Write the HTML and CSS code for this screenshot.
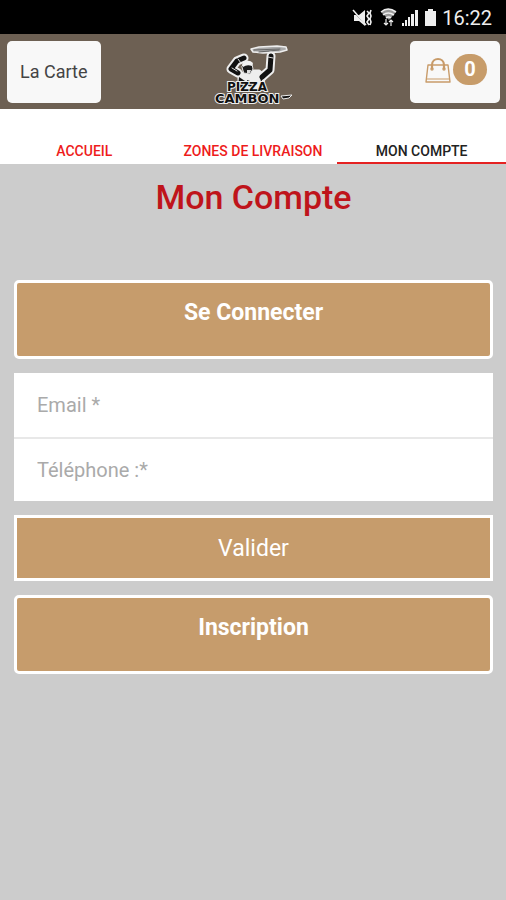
FILE: index.html
```html
<!DOCTYPE html>
<html lang="fr">
<head>
<meta charset="utf-8">
<meta name="viewport" content="width=device-width, initial-scale=1">
<title>Mon Compte</title>
<link rel="stylesheet" href="styles.css">
</head>
<body>
<div class="status">
  <svg class="status-icons" width="88" height="20" viewBox="0 0 88 20" aria-hidden="true">
    <g fill="#eee">
      <path d="M3 7h5l6-5v16l-6-5H3z"/>
      <path d="M2 3l13 14" stroke="#000" stroke-width="1"/>
      <path d="M2 2l13 15" stroke="#eee" stroke-width="1.5"/>
      <path d="M16 3l2 2-2 3 2 3-2 3 2 3M20 2l-1 3 1 3-1 3 1 3-1 3" fill="none" stroke="#eee" stroke-width="1.6"/>
      <path d="M30 4q7-6 15 0l-7 8z" fill="#999"/>
      <path d="M30 4q7-6 15 0M32 7q5-4 11 0M35 10q3-2 5 0" fill="none" stroke="#eee" stroke-width="1.6"/>
      <path d="M35 11v6M33 15l2 2 2-2M40 18v-6M38 14l2-2 2 2" fill="none" stroke="#eee" stroke-width="1.2"/>
      <path d="M51 15h2v3h-2zM54 12h2v6h-2zM57 9h2v9h-2zM60 6h3v12h-3zM64 2h3v16h-3z"/>
      <path d="M77 1h5v2h3v15H74V3h3z"/>
    </g>
  </svg>
  <span>16:22</span>
</div>
<header class="header">
  <button class="header-button" type="button">La Carte</button>
  <svg class="logo" width="84" height="70" viewBox="0 0 84 70" role="img" aria-label="Pizza Cambon">
    <g transform="translate(0 2)" stroke-linejoin="round" stroke-linecap="round">
      <path d="M37 10l8-2 18-1 9 1 1 3-7 2-17 1-10-1z" fill="#aaa" stroke="#eee" stroke-width="1.5"/>
      <path d="M40 11l26-1M45 13l20-2" stroke="#666" fill="none"/>
      <path d="M30 19l-7 3-6 8 7 4M57 17l-1 14-8 7" fill="none" stroke="#eee" stroke-width="9"/>
      <path d="M25 36l8-4h12l6 5-4 12H25z" fill="#eee" stroke="#eee" stroke-width="3"/>
      <path d="M30 19l-7 3-6 8 7 4M57 17l-1 14-8 7" fill="none" stroke="#111" stroke-width="5"/>
      <path d="M54 18l5 1M24 20l3 4M18 29l5 3" fill="none" stroke="#ddd"/>
      <path d="M28 27q4-6 10-2l1 5-3 5-6-1z" fill="#1b1b1b" stroke="#ddd" stroke-width="1"/>
      <path d="M28 25q6-6 11-1l-1 3q-5-2-9 1z" fill="#f2f2f2"/>
      <path d="M33 31h4l-1 3h-3z" fill="#ddd"/>
      <path d="M25 38l6 4-1 6-6 1zM33 41l6 2v5l-5-1zM46 38l5-2-4 7z" fill="#151515"/>
    </g>
    <g class="logo-text">
      <text class="logo-top" x="13" y="54">PIZZA</text>
      <text x="1" y="66">CAMBON</text>
    </g>
    <path d="M67 59l11-1-3 3-6 1z" fill="#111" stroke="#eee"/>
  </svg>
  <button class="header-button cart" type="button" aria-label="Panier, 0 article">
    <svg width="26" height="26" viewBox="0 0 26 26" fill="none" stroke="#c89b69" stroke-width="1.4" stroke-linejoin="round" aria-hidden="true">
      <path d="M3 8h20l2 17H1z"/>
      <path d="M1 22h24" stroke-width="1"/>
      <path d="M7 12V8c0-8 12-8 12 0v4" stroke-width="2.2"/>
      <circle cx="7" cy="12" r="1"/><circle cx="19" cy="12" r="1"/>
    </svg>
    <span class="badge">0</span>
  </button>
</header>
<nav class="tabs">
  <a class="tab" href="#accueil">ACCUEIL</a>
  <a class="tab" href="#zones">ZONES DE LIVRAISON</a>
  <a class="tab tab-active" href="#compte" aria-current="page">MON COMPTE</a>
</nav>
<main class="account">
  <h1 class="title">Mon Compte</h1>
  <button class="action action-tall" type="button">Se Connecter</button>
  <form class="login">
    <div class="fields">
      <input class="field" type="email" placeholder="Email *" aria-label="Email">
      <input class="field" type="tel" placeholder="Téléphone :*" aria-label="Téléphone">
    </div>
    <button class="action" type="submit">Valider</button>
  </form>
  <button class="action action-tall" type="button">Inscription</button>
</main>
</body>
</html>
```
FILE: styles.css
```css
* {
  box-sizing: border-box;
}

body {
  margin: 0;
  min-height: 100vh;
  background: #ccc;
  font-family: Roboto, "Liberation Sans", sans-serif;
}

button,
input {
  font-family: inherit;
}

.status {
  display: flex;
  align-items: center;
  justify-content: flex-end;
  gap: 3px;
  height: 34px;
  padding: 2px 14px 0 0;
  background: #000;
  color: #eee;
  font-size: 20px;
}

.header {
  display: flex;
  align-items: center;
  justify-content: space-between;
  height: 75px;
  padding: 0 6px 0 7px;
  background: #6d6053;
}

.header-button {
  height: 62px;
  padding: 0 14px 0 13px;
  border: 0;
  border-radius: 5px;
  background: #f8f8f8;
  color: #444;
  font-size: 18px;
}

.logo-text {
  fill: #111;
  stroke: #eee;
  stroke-width: 2px;
  paint-order: stroke;
  font-family: "DejaVu Sans", sans-serif;
  font-size: 13px;
  font-weight: bold;
}

.logo-top {
  font-size: 12px;
}

.cart {
  display: flex;
  align-items: center;
  gap: 2px;
  width: 90px;
  padding: 0 0 4px 15px;
}

.badge {
  width: 34px;
  border-radius: 16px;
  background: #c79c6a;
  color: #fff;
  font-size: 20px;
  font-weight: bold;
  line-height: 31px;
}

.tabs {
  display: grid;
  grid-template-columns: repeat(3, 1fr);
  height: 55px;
  background: #fff;
}

.tab {
  display: flex;
  align-items: flex-end;
  justify-content: center;
  padding-bottom: 3px;
  border-bottom: 2px solid transparent;
  color: #ee1c1c;
  font-size: 14px;
  font-weight: 500;
  line-height: 16px;
  text-decoration: none;
}

.tab-active {
  border-color: #e52222;
  color: #222;
}

.account {
  display: flex;
  flex-direction: column;
  gap: 14px;
  padding: 12px 13px 14px 14px;
}

.title {
  margin: 0 0 48px;
  color: #bf141b;
  font-size: 34px;
  font-weight: 500;
  line-height: 42px;
  text-align: center;
}

.action {
  width: 100%;
  height: 66px;
  padding: 0;
  border: 3px solid #fff;
  background: #c69c6c;
  color: #fff;
  font-size: 23px;
}

.action-tall {
  height: 79px;
  padding-bottom: 14px;
  border-radius: 5px;
  font-weight: bold;
}

.login {
  display: grid;
  gap: 14px;
}

.fields {
  display: grid;
}

.field {
  width: 100%;
  height: 64px;
  padding: 2px 23px;
  border: 0;
  border-radius: 0;
  background: #fff;
  color: #444;
  font-size: 20px;
}

.field + .field {
  border-top: 2px solid #e8e8e8;
}

.field::placeholder {
  color: #aaa;
}
```
